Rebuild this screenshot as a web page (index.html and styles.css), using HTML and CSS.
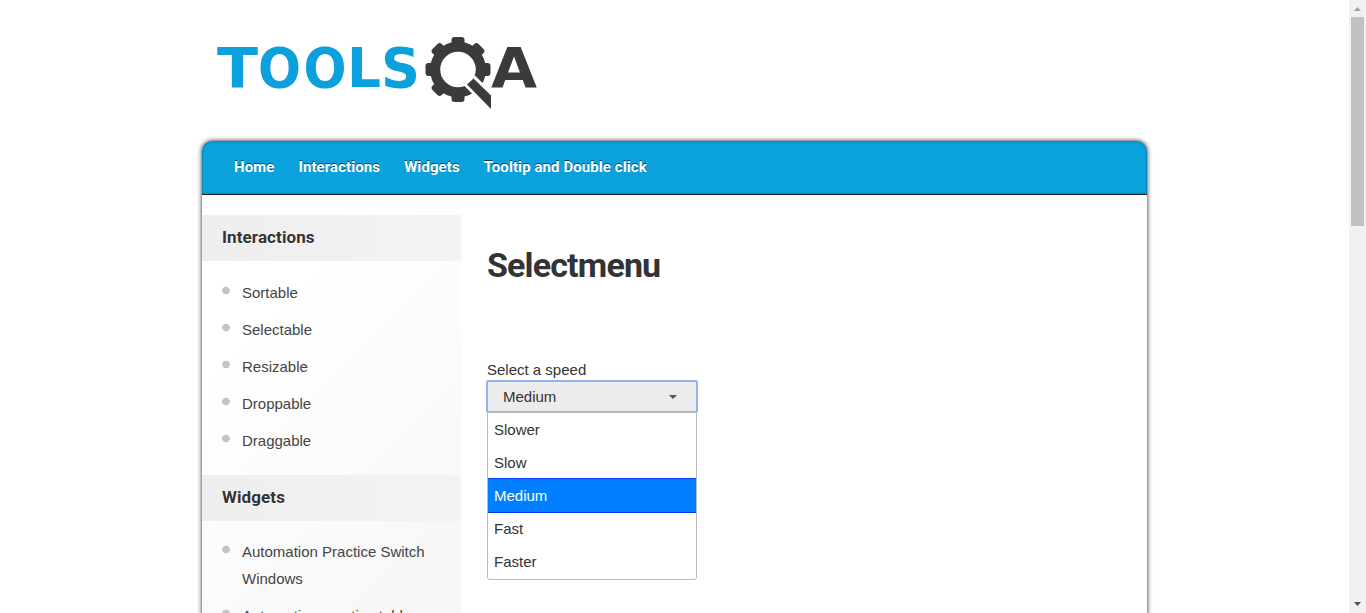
FILE: index.html
```html
<!DOCTYPE html>
<html lang="en">
<head>
<meta charset="utf-8">
<title>Selectmenu</title>
<link rel="stylesheet" href="styles.css">
</head>
<body>
<div class="viewport">
  <div class="page">
    <header class="brand">
      <svg class="logo" width="330" height="80" viewBox="212 33 330 80" role="img" aria-label="ToolsQA">
        <g class="logo-tools">
          <text x="217" y="87" textLength="41" lengthAdjust="spacingAndGlyphs">T</text>
          <text x="258" y="87" textLength="43" lengthAdjust="spacingAndGlyphs">O</text>
          <text x="303.500" y="87" textLength="43" lengthAdjust="spacingAndGlyphs">O</text>
          <text x="347" y="87" textLength="34" lengthAdjust="spacingAndGlyphs">L</text>
          <text x="381" y="87" textLength="39" lengthAdjust="spacingAndGlyphs">S</text>
        </g>
        <text class="logo-a" x="491" y="87" textLength="46" lengthAdjust="spacingAndGlyphs">A</text>
        <g fill="#3b3b3b">
          <rect x="451.500" y="37" width="13" height="65" rx="3"/>
          <rect x="451.500" y="37" width="13" height="65" rx="3" transform="rotate(45 458 69.500)"/>
          <rect x="451.500" y="37" width="13" height="65" rx="3" transform="rotate(90 458 69.500)"/>
          <rect x="451.500" y="37" width="13" height="65" rx="3" transform="rotate(135 458 69.500)"/>
          <circle cx="458" cy="69.500" r="28"/>
        </g>
        <circle cx="458" cy="69.500" r="17.800" fill="#fff"/>
        <path d="M464.500 86 L475 75.500 L483 83.500 L491 91 V113 Z" fill="#fff"/>
        <path d="M467 84.500 L473.500 78.500 L491 95.500 V109 Z" fill="#3b3b3b"/>
      </svg>
    </header>
    <div class="shell">
      <nav class="nav">
        <a>Home</a><a>Interactions</a><a>Widgets</a><a>Tooltip and Double click</a>
      </nav>
      <div class="columns">
        <aside class="sidebar">
          <h3>Interactions</h3>
          <ul class="interactions">
            <li>Sortable</li><li>Selectable</li><li>Resizable</li><li>Droppable</li><li>Draggable</li>
          </ul>
          <h3>Widgets</h3>
          <ul class="widgets">
            <li>Automation Practice Switch Windows</li><li>Automation practice table</li>
          </ul>
        </aside>
        <main class="content">
          <h1>Selectmenu</h1>
          <div class="label">Select a speed</div>
          <div class="select"><span>Medium</span><svg width="8" height="4" viewBox="0 0 8 4"><path d="M0 0H8L4 4Z" fill="#555"/></svg></div>
          <ul class="options">
            <li>Slower</li><li>Slow</li><li class="active">Medium</li><li>Fast</li><li>Faster</li>
          </ul>
        </main>
      </div>
    </div>
  </div>
  <div class="scrollbar">
    <svg width="7" height="4" viewBox="0 0 7 4"><path d="M0 4H7L3.500 0Z" fill="#a3a3a3"/></svg>
    <div class="thumb"></div>
    <svg class="down" width="7" height="4" viewBox="0 0 7 4"><path d="M0 0H7L3.500 4Z" fill="#505050"/></svg>
  </div>
</div>
</body>
</html>
```
FILE: styles.css
```css
* { box-sizing: border-box; }
body { margin: 0; background: #fff; color: #333; font: 15px/27px "Liberation Sans", Arial, sans-serif; overflow: hidden; }
h1, h3, ul { margin: 0; padding: 0; }
ul { list-style: none; }
.viewport { display: flex; height: 613px; overflow: hidden; }
.page { flex: 1; padding-left: 202px; }
.brand { height: 141px; padding: 33px 0 0 10px; }
.logo { display: block; }
.logo text { font: bold 56px "DejaVu Sans", sans-serif; }
.logo-tools { fill: #0aa1dd; }
.logo-a { fill: #3b3b3b; }
.shell { width: 945px; height: 700px; border-radius: 10px 10px 0 0; box-shadow: 0 0 5px #222; background: #fff; }
.nav { display: flex; gap: 24px; height: 54px; padding: 13px 0 0 32px; background: #0aa1dd; border-bottom: 1px solid #222; border-radius: 10px 10px 0 0; box-shadow: inset 0 0 2px rgba(0,0,0,.5); color: #fff; font: bold 15px/27px Roboto, sans-serif; letter-spacing: .08px; text-shadow: 0 -1px 0 #033e57; }
.columns { display: flex; height: 646px; }
.sidebar { width: 259px; padding-top: 20px; background: linear-gradient(135deg, #fff 20%, #f2f2f2); }
.sidebar h3 { height: 46px; padding-left: 20px; background: linear-gradient(90deg, #eee, #f3f3f3); font: bold 17px/45px Roboto, sans-serif; letter-spacing: .1px; text-shadow: 0 1px 0 #fff; }
.sidebar ul { padding-left: 20px; color: #444; }
.interactions { height: 214px; padding-top: 18px; }
.widgets { padding-top: 17px; }
.sidebar li { margin-bottom: 10px; padding: 0 20px; background: radial-gradient(circle at 4px 11.5px, #c4c4c4 3.500px, transparent 4.200px); }
.content { padding: 49px 0 0 27px; }
.content h1 { height: 112px; margin-left: -1px; font: bold 34px/42px Roboto, sans-serif; letter-spacing: -.85px; }
.label { height: 24px; margin-left: -1px; line-height: 28px; }
.select { display: flex; align-items: center; justify-content: space-between; width: 212px; height: 33px; margin-left: -2px; padding: 0 19px 0 15px; border: 2px solid #8eb5f2; border-radius: 2px; background: #ececec; }
.options { width: 210px; height: 168px; margin: -1px 0 0 -1px; border: 1px solid #bbb; border-radius: 0 0 3px 3px; background: #fff; }
.options li { height: 33px; padding-left: 6px; line-height: 33px; }
.options .active { height: 35px; margin: -1px 0; border: solid #003eff; border-width: 1px 0; background: #007fff; color: #fff; }
.scrollbar { display: flex; flex-direction: column; align-items: center; width: 17px; padding: 7px 0; background: #f1f1f1; }
.thumb { width: 13px; height: 209px; margin-top: 6px; background: #c1c1c1; }
.down { margin-top: auto; }
```
